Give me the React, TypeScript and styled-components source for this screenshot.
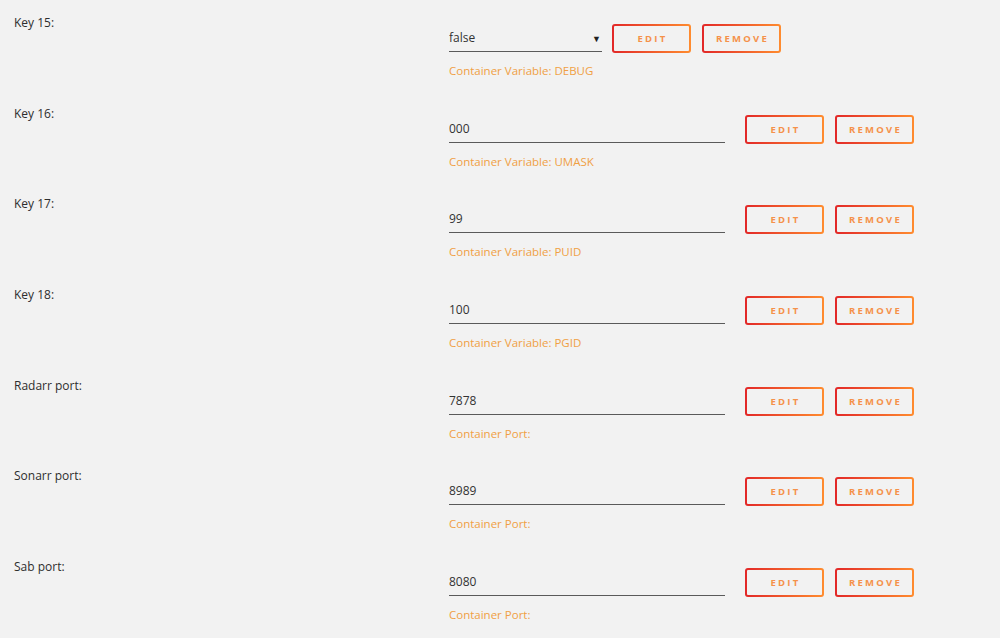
import * as React from "react";
import styled, { createGlobalStyle } from "styled-components";

const Global = createGlobalStyle`
  html, body {
    margin: 0;
    padding: 0;
    background: #f2f2f2;
  }
  body {
    font-family: "Open Sans", "Noto Sans", sans-serif;
    color: #3a3a3a;
  }
`;

const Page = styled.div`
  width: 1000px;
  height: 638px;
  overflow: hidden;
  background: #f2f2f2;
`;

const Row = styled.div`
  display: flex;
  height: 90.67px;
`;

const Label = styled.div`
  width: 435px;
  padding: 15px 0 0 14px;
  font-size: 12px;
  line-height: 16px;
  color: #2e2e2e;
`;

const Field = styled.div`
  display: flex;
  flex-direction: column;
  padding-top: 24px;
`;

const Controls = styled.div`
  display: flex;
  align-items: flex-start;
`;

const TextInput = styled.input`
  box-sizing: border-box;
  width: 276px;
  height: 28px;
  margin-right: 20px;
  padding: 0;
  border: none;
  border-bottom: 1px solid #5a5a5a;
  background: transparent;
  font-family: "Open Sans", "Noto Sans", sans-serif;
  font-size: 12px;
  color: #333;
  outline: none;
`;

const SelectWrap = styled.div`
  position: relative;
  width: 153px;
  margin-right: 10px;
  &::after {
    content: "▼";
    position: absolute;
    right: 1px;
    top: 8px;
    font-size: 9px;
    color: #222;
    pointer-events: none;
  }
`;

const Select = styled.select`
  box-sizing: border-box;
  width: 100%;
  height: 28px;
  padding: 0;
  border: none;
  border-bottom: 1px solid #5a5a5a;
  border-radius: 0;
  background: transparent;
  appearance: none;
  font-family: "Open Sans", "Noto Sans", sans-serif;
  font-size: 12px;
  color: #333;
  outline: none;
`;

const Button = styled.button<{ $gap?: number }>`
  box-sizing: border-box;
  width: 79px;
  height: 29px;
  margin-right: ${(p) => p.$gap ?? 0}px;
  padding: 0 0 0 2px;
  border: 2px solid transparent;
  border-radius: 3px;
  background:
    linear-gradient(#f2f2f2, #f2f2f2) padding-box,
    linear-gradient(90deg, #e22828 0%, #ff8c2f 100%) border-box;
  font-family: "Open Sans", "Noto Sans", sans-serif;
  font-size: 9.5px;
  font-weight: 700;
  letter-spacing: 2.2px;
  color: #f5914a;
  cursor: pointer;
`;

const Description = styled.div`
  margin-top: 11px;
  font-size: 11.5px;
  line-height: 14px;
  color: #f0a044;
`;

interface IEntry {
	label: string;
	value: string;
	note: string;
	select?: boolean;
}

const entries: IEntry[] = [
	{ label: "Key 15:", value: "false", note: "Container Variable: DEBUG", select: true },
	{ label: "Key 16:", value: "000", note: "Container Variable: UMASK" },
	{ label: "Key 17:", value: "99", note: "Container Variable: PUID" },
	{ label: "Key 18:", value: "100", note: "Container Variable: PGID" },
	{ label: "Radarr port:", value: "7878", note: "Container Port:" },
	{ label: "Sonarr port:", value: "8989", note: "Container Port:" },
	{ label: "Sab port:", value: "8080", note: "Container Port:" },
];

const SettingRow = ({ entry }: { entry: IEntry }) => (
	<Row>
		<Label>{entry.label}</Label>
		<Field>
			<Controls>
				{entry.select ? (
					<SelectWrap>
						<Select defaultValue={entry.value}>
							<option value="false">false</option>
							<option value="true">true</option>
						</Select>
					</SelectWrap>
				) : (
					<TextInput defaultValue={entry.value} />
				)}
				<Button $gap={11}>EDIT</Button>
				<Button>REMOVE</Button>
			</Controls>
			<Description>{entry.note}</Description>
		</Field>
	</Row>
);

const App = () => (
	<Page>
		<Global />
		{entries.map((e) => (
			<SettingRow key={e.label} entry={e} />
		))}
	</Page>
);

export default App;
